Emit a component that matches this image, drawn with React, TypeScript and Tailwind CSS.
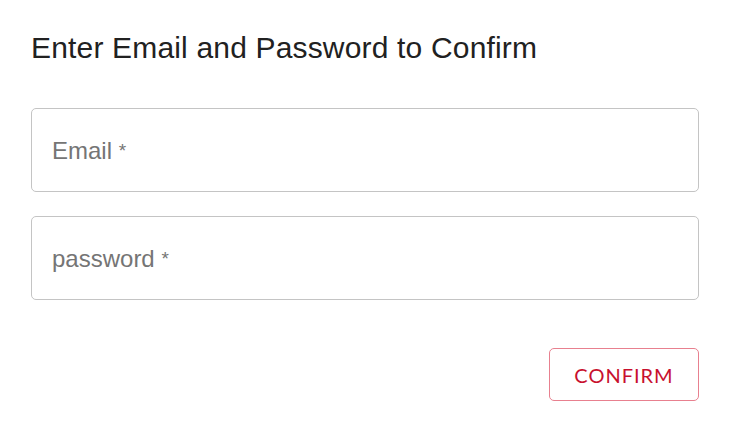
import React from "react";

export default function App() {
  return (
    <div className="w-[731px] h-[438px] bg-white" style={{ fontFamily: '"Liberation Sans", Arial, sans-serif' }}>
      <div className="pl-[31px] pr-[32px] pt-[33px]">
        <h2 className="text-[30px] leading-[30px] tracking-[0.17px] text-[#212121] font-normal">Enter Email and Password to Confirm</h2>
        <div className="mt-[45px] flex flex-col gap-[24px]">
          <div className="h-[84px] w-[668px] rounded-[5px] border border-[#c4c4c4] flex items-center pl-[20px] pt-[2px]">
            <span className="text-[24px] text-[#757575]">Email <span className="text-[19px] align-[2px]">*</span></span>
          </div>
          <div className="h-[84px] w-[668px] rounded-[5px] border border-[#c4c4c4] flex items-center pl-[20px] pt-[2px]">
            <span className="text-[24px] text-[#757575]">password <span className="text-[19px] align-[2px]">*</span></span>
          </div>
        </div>
        <div className="mt-[48px] flex justify-end w-[668px]">
          <button
            className="h-[53px] w-[150px] rounded-[5px] border border-[#e8808f] text-[#c8102e] text-[20px] tracking-[1px] flex items-center justify-center"
            style={{ fontFamily: 'Lato, "Liberation Sans", sans-serif' }}
          >
            CONFIRM
          </button>
        </div>
      </div>
    </div>
  );
}
